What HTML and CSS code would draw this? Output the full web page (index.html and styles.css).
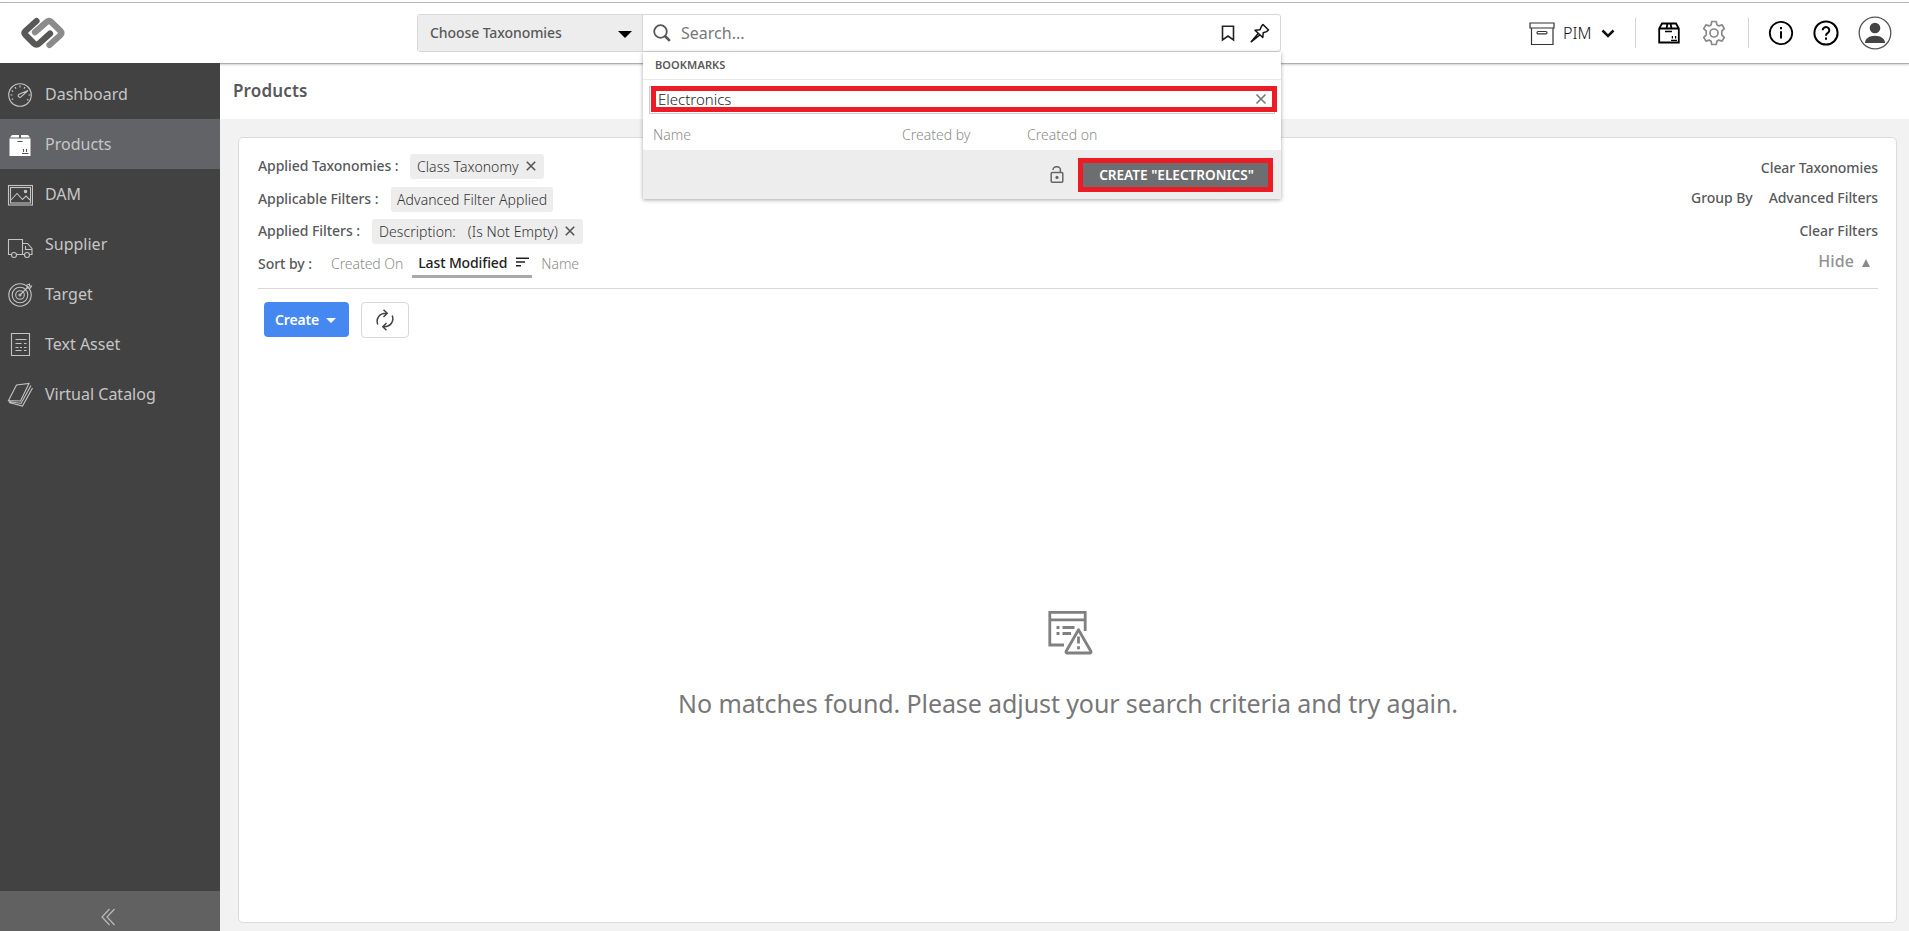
FILE: index.html
```html
<!DOCTYPE html>
<html lang="en">
<head>
<meta charset="utf-8">
<title>Products</title>
<link rel="stylesheet" href="styles.css">
</head>
<body>
<header class="topbar">
  <svg class="logo" width="46" height="32" viewBox="0 0 46 32" fill="none" stroke-width="6.2" stroke-linecap="round" stroke-linejoin="round">
    <path stroke="#8b8b8b" d="M15 15.2 26.5 5.200Q29 3 31.500 5.200L40.500 14Q42.500 16 40.500 18L29.500 28"/>
    <path stroke="#585856" d="M16.500 4 5.500 14Q3.500 16 5.500 18L14 26.500Q16.500 29 19 26.500L30 16.600"/>
  </svg>
  <div class="search">
    <div class="taxonomy"><span>Choose Taxonomies</span><i class="caret"></i></div>
    <div class="field">
      <svg width="18" height="18" viewBox="0 0 18 18" fill="none" stroke="#555"><circle cx="7.500" cy="7.500" r="6.300" stroke-width="1.800"/><path stroke-width="2.600" d="M12 12l4.800 4.800"/></svg>
      <span class="placeholder">Search...</span>
      <svg class="mark" width="14" height="17" viewBox="0 0 14 17" fill="none" stroke="#222" stroke-width="1.600"><path d="M1.500 1.200h11V15L7 11 1.500 15z"/></svg>
      <svg class="pin" width="20" height="20" viewBox="0 0 20 20" fill="none" stroke="#111" stroke-width="1.500" stroke-linejoin="round"><path d="M13 1.500 18.500 7 16.500 8.600 13.200 9.700 12.800 14.500 5 7.200 10 6.700 11.500 3.300zM8.200 10.600 1.200 18.800 9.800 12"/></svg>
    </div>
    <div class="dropdown">
      <div class="drop-title">BOOKMARKS</div>
      <div class="drop-input"><div class="box"><span>Electronics</span>
        <svg width="12" height="12" viewBox="0 0 12 12" stroke="#777" stroke-width="1.600"><path d="M1.500 1.500l9 9M10.500 1.500l-9 9"/></svg></div></div>
      <div class="drop-cols"><span>Name</span><span>Created by</span><span>Created on</span></div>
      <div class="drop-foot">
        <svg width="14" height="18" viewBox="0 0 14 18" fill="none" stroke="#666" stroke-width="1.500"><rect x="1.200" y="6.500" width="11.600" height="9.800" rx="1"/><path d="M3 4V3.800a3.600 3 0 0 1 7.400 0V6.500"/><circle cx="7" cy="11.400" r=".9" fill="#555"/></svg>
        <button class="create-mark">CREATE "ELECTRONICS"</button>
      </div>
    </div>
  </div>
  <div class="tools">
    <svg class="pim" width="26" height="24" viewBox="0 0 26 24" fill="none" stroke="#333" stroke-width="1.200"><path d="M1 1h24v5H1zM2.500 6v16.500h21.500V6"/><rect x="8" y="9.500" width="10" height="2.400" rx="1.200"/></svg>
    <span class="pim-text">PIM</span>
    <svg class="chev" width="14" height="9" viewBox="0 0 14 9" fill="none" stroke="#111" stroke-width="2.500"><path d="M1.500 1.500 7 7l5.500-5.500"/></svg>
    <i class="sep"></i>
    <svg class="box-icon" width="22" height="22" viewBox="0 0 22 22" fill="none" stroke="#000" stroke-width="1.800"><path d="M1.200 6.500V20.500h19.600V6.500L18 1.500H4zM1.200 6.500h19.600M8.500 6.500l1-5M13.500 6.500l-1-5"/><path stroke-width="1.300" d="M7 9.500h7M13 18.300h6M14.400 16.500v-2.500M17.600 16.500v-2.500"/></svg>
    <svg class="gear" width="26" height="26" viewBox="0 0 26 26" fill="none" stroke="#8a8a8a" stroke-width="1.700" stroke-linejoin="round"><path d="M10.800 1.500h4.400l.7 3.300 1.900 1.100 3.300-1 2.200 3.800-2.500 2.300v4l2.500 2.300-2.200 3.800-3.300-1-1.900 1.100-.7 3.300h-4.400l-.7-3.300-1.900-1.100-3.300 1-2.200-3.800L5.200 15v-4L2.700 8.700l2.200-3.800 3.300 1 1.900-1.100z"/><circle cx="13" cy="13" r="4"/></svg>
    <i class="sep second"></i>
    <svg class="info" width="26" height="26" viewBox="0 0 26 26" fill="none" stroke="#000" stroke-width="1.800"><circle cx="13" cy="13" r="11.200"/><path stroke-width="2" d="M13 11.300v7.200M13 7v2.200"/></svg>
    <svg class="help" width="26" height="26" viewBox="0 0 26 26" fill="none" stroke="#000" stroke-width="2"><circle cx="13" cy="13" r="11.600"/><path d="M9.700 10.300a3.300 3.100 0 1 1 5.300 2.400c-1.300 1-2 1.300-2 3M13 17.500v2.300"/></svg>
    <svg class="user" width="34" height="34" viewBox="0 0 34 34"><circle cx="17" cy="17" r="15.800" fill="#fff" stroke="#555" stroke-width="1.300"/><circle cx="17" cy="12" r="5.300" fill="#444"/><path fill="#444" d="M7 27c0-4.500 4.500-7.300 10-7.300s10 2.800 10 7.300z"/></svg>
  </div>
</header>
<div class="body">
  <nav class="side">
    <a class="item"><svg viewBox="0 0 26 26"><circle cx="13" cy="13" r="11.300"/><path d="M13 3.500v2M8 5l1 1.700M4.700 8.500l1.500 1M3.500 13h2M4.700 17.500l1.500-.8M21.500 13h2M20 17.500l1.500.8M18 5l-1 1.600M21 8.500l-7 6.300a1.600 1.600 0 1 1-1.900-2.500z"/></svg>Dashboard</a>
    <a class="item active"><svg viewBox="0 0 26 26"><path fill="#fff" stroke="none" d="M2.500 6.500h21V24h-21zM5 3h7v2.500H3zM14 3h7l2 2.500h-9z"/><path stroke="#555" d="M10.500 9.500h5M15 21.500h6.500M16.500 20v-3M19.500 20v-3"/></svg>Products</a>
    <a class="item"><svg viewBox="0 0 26 26"><rect x="1.500" y="3.500" width="24" height="19.500"/><rect x="3.500" y="5.500" width="20" height="15.500"/><path d="M4 18l6-6.500 5.500 6 3.500-3.500 4 4"/><circle cx="18.500" cy="9.500" r="1.200" fill="#c4c4c4"/></svg>DAM</a>
    <a class="item"><svg class="low" viewBox="0 0 26 26"><path d="M4.500 20.500H1.500V5.500h14v15h-6M15.500 9.500h5l4.500 5v6h-2M15.500 20.500h2M18.500 12v3.500h6.500"/><circle cx="7" cy="21" r="2.500"/><circle cx="20" cy="21" r="2.500"/></svg>Supplier</a>
    <a class="item"><svg viewBox="0 0 26 26"><circle cx="13" cy="13" r="11.200"/><circle cx="13" cy="13" r="7.800"/><circle cx="13" cy="13" r="4.300"/><circle cx="13" cy="13" r="1"/><path d="M13 13 21.500 4.500M20 3v3h3.500l1-2h-2V2z"/></svg>Target</a>
    <a class="item"><svg viewBox="0 0 26 26"><path d="M4.500 1.500h18v22h-18z"/><path d="M8.500 7.500h11M8.500 11.500h6M17 11.500h2.500M8.500 15.500h3M13 15.500h2M17 15.500h2.500M8.500 18.500h6M17 18.500h2.500"/></svg>Text Asset</a>
    <a class="item"><svg viewBox="0 0 26 26"><path d="M9.500 3 22 1.500 13.500 19 1.500 18.500zM1.500 19.500l12.500 2L24 3.500M2 20.500l13.500 3.500L25.500 6"/></svg>Virtual Catalog</a>
    <div class="collapse"><svg width="16" height="18" viewBox="0 0 16 18" fill="none" stroke="#bbb" stroke-width="1.200"><path d="M9.500 1 2 9l7.500 8M14.500 1 7 9l7.500 8"/></svg></div>
  </nav>
  <main class="main">
    <h1 class="title">Products</h1>
    <section class="card">
      <div class="filters">
        <div class="left">
          <div class="row"><span class="label l1">Applied Taxonomies :</span><span class="chip">Class Taxonomy<svg width="10" height="10" viewBox="0 0 10 10"><path d="M.8.800l8.400 8.400M9.200.800.8 9.200"/></svg></span></div>
          <div class="row"><span class="label l2">Applicable Filters :</span><span class="chip wide">Advanced Filter Applied</span></div>
          <div class="row"><span class="label l3">Applied Filters :</span><span class="chip"><span class="desc">Description:</span>(Is Not Empty)<svg width="10" height="10" viewBox="0 0 10 10"><path d="M.8.800l8.400 8.400M9.200.800.8 9.200"/></svg></span></div>
          <div class="row sort"><span class="label l4">Sort by :</span><span class="opt first">Created On</span><span class="current">Last Modified<svg width="13" height="10" viewBox="0 0 13 10" stroke="#222" stroke-width="1.500"><path d="M0 1.200h13M0 5h9M0 8.800h5"/></svg></span><span class="opt">Name</span></div>
        </div>
        <div class="right">
          <span>Clear Taxonomies</span>
          <div class="pair"><span>Group By</span><span>Advanced Filters</span></div>
          <span class="clear">Clear Filters</span>
          <span class="hide">Hide<i></i></span>
        </div>
      </div>
      <div class="actions">
        <button class="create">Create<i></i></button>
        <button class="refresh"><svg width="18" height="22" viewBox="0 0 18 22" fill="none" stroke="#444" stroke-width="1.500"><path d="M1.800 15.500C-.3 10 3 4 10.500 4.300M7.500.8l3.700 3.500L7.500 8M16.200 6.500c2.100 5.500-1.200 11.500-8.700 11.200M10.500 14l-3.700 3.700 3.700 3.500"/></svg></button>
      </div>
      <div class="empty">
        <svg width="45" height="44" viewBox="0 0 45 44" fill="none" stroke="#808080" stroke-width="2.800"><path d="M16 34H1.800V1.300h35.400V20M1.800 8.800h35.400"/><path d="M8.500 16.500h3M14.500 16.500h12M8.500 22.500h3M14.500 22.500h8.500"/><path stroke-linejoin="round" d="M30.500 18.800 43 40.500q.3 1.500-1.200 1.500H19.200q-1.500 0-1.200-1.500z"/><path d="M30.500 25.500v7M30.500 35.300v3"/></svg>
        <p>No matches found. Please adjust your search criteria and try again.</p>
      </div>
    </section>
  </main>
</div>
</body>
</html>
```
FILE: styles.css
```css
* { box-sizing: border-box; }
body { margin: 0; height: 931px; overflow: hidden; display: flex; flex-direction: column; font-family: "Noto Sans", "Open Sans", sans-serif; font-size: 14px; color: #58595b; background: #fff; }
button { font-family: inherit; padding: 0; margin: 0; }
svg { flex: none; display: block; }

.topbar { position: relative; z-index: 2; flex: none; height: 62px; margin-top: 2px; border-top: 1px solid #b5b5b5; border-bottom: 1px solid #adadad; box-shadow: 0 1px 2px rgba(0,0,0,.18); background: #fff; display: flex; align-items: flex-start; }
.logo { margin: 14px 0 0 20px; }
.search { position: relative; display: flex; width: 864px; height: 38px; margin: 11px 0 0 351px; border: 1px solid #d7d7d7; border-radius: 3px; }
.taxonomy { width: 225px; padding: 0 10px 1px 12px; display: flex; align-items: center; justify-content: space-between; background: #ededed; border-right: 1px solid #d7d7d7; font-weight: 500; letter-spacing: -.08px; }
.caret { border: 7px solid transparent; border-top: 7px solid #000; border-bottom: 0; margin-top: 3px; }
.field { flex: 1; display: flex; align-items: center; padding: 0 10px 0 10px; }
.placeholder { flex: 1; padding-left: 10px; font-size: 16px; color: #777; }
.mark { margin-right: 15px; }
.dropdown { position: absolute; top: 37px; left: 225px; width: 638px; height: 147px; background: #fff; box-shadow: 0 1px 4px rgba(0,0,0,.35); }
.drop-title { height: 28px; padding: 3px 12px 0; border-bottom: 1px solid #e8e8e8; font-size: 11px; line-height: 19px; font-weight: 600; letter-spacing: .1px; }
.drop-input { padding: 6px 6px 0 6px; }
.box { position: relative; height: 28px; padding: 0 7px 3px 8px; display: flex; align-items: center; justify-content: space-between; border: 1px solid #ccc; font-size: 15px; line-height: 20px; color: #222; font-weight: 350; }
.box::after { content: ""; position: absolute; inset: -1px -3px 1px 1px; border: 5px solid #ed1c24; }
.drop-cols { display: grid; grid-template-columns: 249px 125px 1fr; height: 36px; padding: 0 10px; line-height: 42px; color: #8c8c8c; font-weight: 350; }
.drop-foot { height: 49px; padding-right: 8px; display: flex; align-items: center; justify-content: flex-end; gap: 14px; background: #ededed; }
.create-mark { width: 195px; height: 34px; margin-top: 1px; padding-left: 2px; border: 5px solid #ed1c24; background: #6d6e71; color: #fff; font-size: 13.6px; line-height: 20px; font-weight: 600; }

.tools { display: flex; align-items: center; height: 60px; margin-left: 248px; }
.pim-text { width: 38px; margin-left: 8px; font-size: 16px; color: #111; font-weight: 300; }
.pim { margin-top: 1px; }
.sep { width: 1px; height: 30px; margin: 0 22px 0 20px; background: #d5d5d5; }
.sep.second { margin-left: 21px; margin-right: 19px; }
.gear { margin-left: 21px; }
.help { margin-left: 19px; }
.user { margin-left: 19px; }

.body { flex: 1; min-height: 0; display: flex; }
.side { width: 220px; margin-top: -1px; background: #424242; display: flex; flex-direction: column; padding-top: 6px; position: relative; z-index: 3; }
.item { height: 50px; padding-left: 7px; display: flex; align-items: center; gap: 12px; font-size: 16px; color: #c6c6c6; }
.item svg { width: 26px; height: 26px; margin-top: 1px; fill: none; stroke: #c4c4c4; stroke-width: 1.100; }
.item .low { margin-top: 5px; }
.active { background: #626366; }
.collapse { height: 40px; margin-top: auto; background: #616161; display: flex; justify-content: center; align-items: center; padding: 11px 4px 0 0; }
.main { flex: 1; display: flex; flex-direction: column; background: #f2f2f2; }
.title { height: 55px; margin: 0; padding: 15px 13px 0; background: #fff; font-size: 17px; line-height: 24px; font-weight: 600; letter-spacing: .15px; }
.card { flex: 1; margin: 18px 12px 8px 18px; padding: 16px 18px 16px 19px; display: flex; flex-direction: column; background: #fff; border: 1px solid #dcdcdc; border-radius: 5px; }
.filters { height: 135px; display: flex; justify-content: space-between; border-bottom: 1px solid #d9d9d9; font-weight: 500; letter-spacing: -.06px; }
.row { height: 25px; margin-bottom: 8px; display: flex; align-items: center; }
.row:nth-child(2) { margin-bottom: 7px; }
.label { padding-bottom: 2px; }
.l1 { width: 152px; } .l2 { width: 133px; } .l3 { width: 114px; } .l4 { width: 73px; }
.chip { height: 25px; padding: 0 8px 1px 7px; display: flex; align-items: center; gap: 7px; background: #ededed; border-radius: 3px; color: #333; font-weight: 350; letter-spacing: .06px; }
.chip.wide { padding: 0 6px 1px; }
.chip svg { stroke: #555; stroke-width: 1.600; }
.desc { margin-right: 5px; }
.sort { height: 25px; }
.opt { padding-bottom: 2px; color: #8c8c8c; font-weight: 350; }
.current { height: 27px; margin: 0 9px 0; padding: 0 3px 2px 6px; display: flex; align-items: center; gap: 9px; border-bottom: 3px solid #aaa; color: #222; letter-spacing: -.12px; }
.right { display: flex; flex-direction: column; align-items: flex-end; line-height: 20px; padding-top: 4px; }
.pair { display: flex; gap: 16px; margin-top: 10px; }
.clear { margin-top: 13px; }
.hide { display: flex; align-items: center; gap: 8px; margin: 10px 8px 0 0; font-size: 16px; color: #929292; letter-spacing: .1px; }
.hide i { border: 4px solid transparent; border-bottom: 8px solid #8a8a8a; border-top: 0; margin-top: 4px; }
.actions { display: flex; gap: 12px; padding: 13px 6px; }
.create { width: 85px; height: 35px; display: flex; align-items: center; justify-content: center; gap: 7px; padding-right: 2px; border: 0; border-radius: 4px; background: #4688f1; color: #fff; font-size: 14px; font-weight: 600; letter-spacing: -.15px; }
.create i { border: 5px solid transparent; border-top: 5px solid #fff; border-bottom: 0; margin-top: 2px; }
.refresh { width: 48px; height: 36px; display: flex; align-items: center; justify-content: center; background: #fff; border: 1px solid #d9d9d9; border-radius: 4px; }
.empty { margin-top: 260px; display: flex; flex-direction: column; align-items: center; }
.empty svg { margin-left: 5px; }
.empty p { margin: 28px 0 0; font-size: 25px; line-height: 40px; color: #777; letter-spacing: -.1px; }
```
